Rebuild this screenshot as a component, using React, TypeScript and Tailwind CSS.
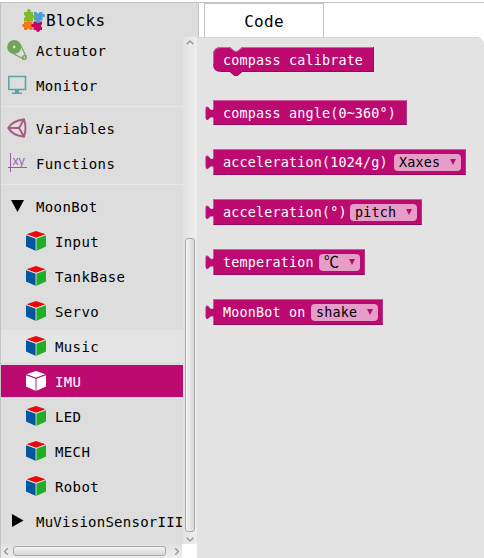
import React from "react";

const mono = "font-['DejaVu_Sans_Mono','Noto_Sans_CJK_SC',monospace]";

function Puzzle() {
  return (
    <svg width="23" height="23" viewBox="0 0 23 23" className="mr-px shrink-0">
      <path d="M2 3h9v9H2z" fill="#80bb2c" />
      <circle cx="6.800" cy="2" r="1.900" fill="#80bb2c" />
      <path d="M12 3h8.500v8.500H12z" fill="#4b9ed5" />
      <circle cx="21.200" cy="6.500" r="1.800" fill="#4b9ed5" />
      <path d="M2 12.500h8.500V21H2z" fill="#f07c1b" />
      <circle cx="1.800" cy="16.500" r="1.800" fill="#f07c1b" />
      <path d="M11.500 12.500H20V21h-8.500z" fill="#c4055f" />
      <circle cx="16" cy="21.200" r="1.800" fill="#c4055f" />
      <circle cx="12" cy="7.500" r="1.800" fill="#80bb2c" />
      <circle cx="16" cy="12.500" r="1.800" fill="#4b9ed5" />
      <circle cx="6.500" cy="11.500" r="1.800" fill="#f07c1b" />
      <circle cx="11" cy="16.500" r="1.800" fill="#c4055f" />
      <circle cx="2" cy="7.500" r="1.300" fill="#ddd" />
      <circle cx="16" cy="3.200" r="1.300" fill="#ddd" />
      <circle cx="20.200" cy="16.800" r="1.300" fill="#ddd" />
      <circle cx="6.500" cy="21" r="1.300" fill="#ddd" />
    </svg>
  );
}

function Cube({ selected = false }: { selected?: boolean }) {
  const line = selected ? "#bc0a71" : "#ddd";
  return (
    <svg width="20" height="20" viewBox="0 0 20 20" className="shrink-0">
      <path d="M0 4 10 7.500V20L0 15.500z" fill={selected ? "#fff" : "#00569f"} />
      <path d="M20 4 10 7.500V20l10-4.500z" fill={selected ? "#fff" : "#20ae27"} />
      <path d="M.5 3.300 10 0l9.500 3.300L10 6.800z" fill={selected ? "#fff" : "#ed0707"} />
      <path d="M0 3.700 10 7.400l10-3.700M10 7.400V20" fill="none" stroke={line} strokeWidth=".9" />
    </svg>
  );
}

function Actuator() {
  return (
    <svg width="20" height="20" viewBox="0 0 20 20" fill="none" stroke="#70a458">
      <circle cx="7.200" cy="7" r="4.200" strokeWidth="5.600" />
      <circle cx="17.300" cy="17.500" r="1.700" strokeWidth="1.600" />
      <path d="m13 4 6.200 12.500M7 14l9.500 5" strokeWidth="1.200" />
    </svg>
  );
}

function Monitor() {
  return (
    <svg width="20" height="20" viewBox="0 0 20 20">
      <path d="M1.800 1.500h16.700v13H1.800z" fill="none" stroke="#5da5a5" strokeWidth="1.600" />
      <path d="M8 15h4v2.500h3V19H5v-1.500h3z" fill="#5da5a5" />
    </svg>
  );
}

function Variables() {
  return (
    <svg width="20" height="20" viewBox="0 0 20 20" fill="none" stroke="#a55b80" strokeWidth="1.900">
      <path d="M1.300 10Q5 3 17 1.200q3 8.800 0 17.600Q5 17 1.300 10zM1 10h11m0 0 5-8.500M12 10l5 8.500" />
    </svg>
  );
}

function Functions() {
  return (
    <svg width="20" height="20" viewBox="0 0 20 20" className="overflow-visible">
      <path d="M3.500 0v19M1 14.500h19" stroke="#995ba5" fill="none" />
      <text x="5.500" y="11.500" fontFamily="Open Sans, sans-serif" fontSize="12" fill="#995ba5" letterSpacing="0">xy</text>
    </svg>
  );
}

function Row({ icon, label, className = "" }: { icon: React.ReactNode; label: string; className?: string }) {
  return (
    <div className={`mb-[3px] flex h-8 shrink-0 items-center pl-[6px] ${className}`}>
      <span className="w-[29px] shrink-0">{icon}</span>
      <span className="pt-0.5">{label}</span>
    </div>
  );
}

function Chevron({ className = "" }: { className?: string }) {
  return (
    <svg width="8" height="5" viewBox="0 0 8 5" className={className}>
      <path d="m.7 4.300 3.300-3.300 3.300 3.300" fill="none" stroke="#969696" strokeWidth="1.400" />
    </svg>
  );
}

function Block({ className, text, value }: { className: string; text: string; value?: string }) {
  return (
    <div className={`relative flex shrink-0 items-center justify-between border border-t-[#d15b9f] border-r-[#b03a83] border-b-[#960859] border-l-[#c95a9b] bg-[#bc0a71] pr-1 pl-[9px] ${className}`}>
      <svg width="9" height="15" viewBox="0 0 9 15" className="absolute top-[5px] -left-[9px]">
        <path d="M9 3.300Q6.500 4.800 4.800 3 3 .3 1.500.8.7 1.200.7 3v9q0 2 1.300 2 1.300-.1 2.800-2 1.700-1.500 4.200-.2z" fill="#bc0a71" />
        <path d="M4.800 3Q3 .3 1.500.8.7 1.200.7 3v9" fill="none" stroke="#cf62a2" strokeWidth=".7" />
      </svg>
      <span className="pt-0.5">{text}</span>
      {value && <Field value={value} />}
    </div>
  );
}

function Field({ value }: { value: string }) {
  return (
    <span className={`flex h-[17px] items-center justify-between rounded-[4px] bg-[#e69dc8] px-[5px] text-black ${value === "℃" ? "w-[41px]" : "w-[67px]"}`}>
      <span className={value === "℃" ? "text-[15px]" : "pt-px"}>{value}</span>
      <svg width="6" height="6" viewBox="0 0 6 6"><path d="M0 0h6L3 6z" fill="#bc0a71" /></svg>
    </span>
  );
}

const modules = ["Input", "TankBase", "Servo", "Music", "IMU", "LED", "MECH", "Robot"];

export default function App() {
  return (
    <div className={`flex h-[558px] w-[484px] flex-col overflow-hidden bg-white text-black ${mono}`}>
      <div className="mt-[2px] flex h-[35px] shrink-0 border-t border-[#c4c4c4] text-[16px] tracking-[0.25px]">
        <div className="flex w-[199px] items-center border-r border-l border-[#c4c4c4] bg-[#ddd] pt-px pl-[21px]">
          <Puzzle />
          <span>Blocks</span>
        </div>
        <div className="ml-[5px] flex w-[120px] items-center justify-center border-x border-t border-[#c4c4c4] pt-[3px]">Code</div>
      </div>
      <div className="flex min-h-0 flex-1">
        <aside className="flex w-[197px] shrink-0 flex-col border-l border-[#c4c4c4] bg-[#ddd]">
          <div className="flex h-[507px] shrink-0">
            <nav className="flex w-[182px] shrink-0 flex-col overflow-hidden text-[14px] leading-5 tracking-[0.37px]">
              <div className="-mt-[3px] flex shrink-0 flex-col">
                <Row icon={<Actuator />} label="Actuator" />
                <Row icon={<Monitor />} label="Monitor" />
                <div className="mt-[2px] mb-[5px] h-px bg-[#e8e8e8]" />
                <Row icon={<Variables />} label="Variables" />
                <Row icon={<Functions />} label="Functions" />
                <div className="mt-[2px] mb-[5px] h-px bg-[#e8e8e8]" />
                <Row icon={<svg width="20" height="12"><path d="M4 0h13l-6.500 12z" /></svg>} label="MoonBot" />
                {modules.map((label) => (
                  <div key={label} className={`mb-[3px] flex h-8 items-center gap-[9px] pl-[25px] ${label === "IMU" ? "bg-[#bc0a71] text-white" : label === "Music" ? "bg-[#e4e4e4]" : ""}`}>
                    <Cube selected={label === "IMU"} />
                    <span className="pt-0.5">{label}</span>
                  </div>
                ))}
                <Row className="tracking-[0.25px]" icon={<svg width="20" height="15"><path d="m5 0 11.500 6.500L5 13z" /></svg>} label="MuVisionSensorIII" />
              </div>
            </nav>
            <div className="flex w-[14px] flex-col items-center bg-linear-to-r from-[#e2e2e2] to-[#eee] pt-[3px]">
              <Chevron />
              <div className="mt-[193px] h-[294px] w-[10px] shrink-0 rounded-[3px] border border-[#aaa] bg-linear-to-r from-[#f4f4f4] to-[#d8d8d8]" />
              <Chevron className="mt-[5px] rotate-180" />
            </div>
          </div>
          <div className="flex h-[14px]">
            <div className="flex w-[181px] items-center justify-between bg-linear-to-b from-[#e2e2e2] to-[#eee] px-px">
              <Chevron className="-rotate-90" />
              <div className="mr-[5px] h-[10px] w-[153px] rounded-[3px] border border-[#aaa] bg-linear-to-b from-[#f4f4f4] to-[#d8d8d8]" />
              <Chevron className="rotate-90" />
            </div>
            <div className="flex-1 bg-white" />
          </div>
        </aside>
        <main className="flex flex-1 flex-col items-start rounded-tr-lg border-t border-[#d4d4d4] bg-[#e3e3e3] pt-[9px] pl-4 text-[13.4px] leading-4 tracking-[0.18px] text-white">
          <div className="relative mb-[28px] flex h-[25px] w-[161px] shrink-0 items-center pt-0.5 pl-[10px]">
            <svg width="161" height="30" viewBox="0 0 161 30" className="absolute top-0 left-0">
              <path d="M8 0h9l4 3.500q2 1 4 0L29 0h132v25H29l-4 3.500q-2 1-4 0L17 25H8q-8 0-8-8V8q0-8 8-8z" fill="#bc0a71" />
              <path d="M.5 17V8Q.5.500 8 .5h8.500L21 4q2 1 4 0L29.500.5H160" fill="none" stroke="#cf62a2" />
              <path d="M160.500 1v23.500H29L25 28q-2 1-4 0l-4-3.500H8" fill="none" stroke="#960859" />
            </svg>
            <span className="relative">compass calibrate</span>
          </div>
          <Block className="mb-6 h-[25px] w-[194px]" text="compass angle(0~360°)" />
          <Block className="mb-6 h-[26px] w-[253px]" text="acceleration(1024/g)" value="Xaxes" />
          <Block className="mb-6 h-[26px] w-[209px]" text="acceleration(°)" value="pitch" />
          <Block className="mb-6 h-[26px] w-[152px]" text="temperation" value="℃" />
          <Block className="h-[26px] w-[170px]" text="MoonBot on" value="shake" />
        </main>
      </div>
    </div>
  );
}
